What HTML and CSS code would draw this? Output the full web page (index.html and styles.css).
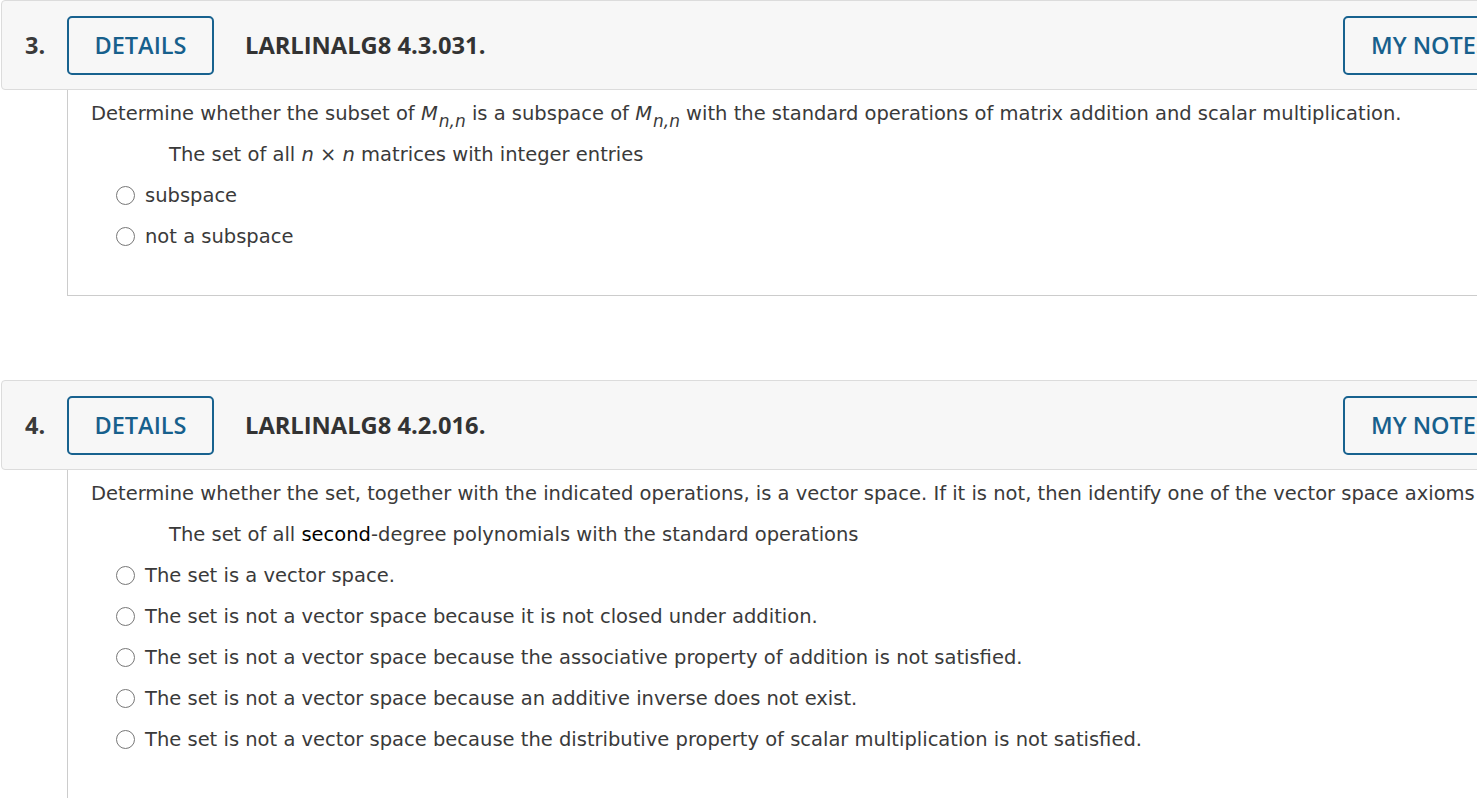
FILE: index.html
```html
<!DOCTYPE html>
<html>
<head>
<meta charset="utf-8">
<link rel="stylesheet" href="styles.css">
</head>
<body>
<div class="page">
  <section class="question">
    <div class="q-header">
      <span class="q-num">3.</span>
      <span class="btn">DETAILS</span>
      <span class="q-title">LARLINALG8 4.3.031.</span>
      <span class="btn btn-notes">MY NOTES</span>
    </div>
    <div class="q-body">
      <p class="line">Determine whether the subset of <i class="math">M</i><sub class="sub">n,n</sub> is a subspace of <i class="math">M</i><sub class="sub">n,n</sub> with the standard operations of matrix addition and scalar multiplication.</p>
      <p class="line indent">The set of all <i class="math">n</i> × <i class="math">n</i> matrices with integer entries</p>
      <label class="line choice"><span class="radio"></span><span>subspace</span></label>
      <label class="line choice"><span class="radio"></span><span>not a subspace</span></label>
    </div>
  </section>
  <section class="question">
    <div class="q-header">
      <span class="q-num">4.</span>
      <span class="btn">DETAILS</span>
      <span class="q-title">LARLINALG8 4.2.016.</span>
      <span class="btn btn-notes">MY NOTES</span>
    </div>
    <div class="q-body">
      <p class="line">Determine whether the set, together with the indicated operations, is a vector space. If it is not, then identify one of the vector space axioms that fails.</p>
      <p class="line indent">The set of all <span class="dark">second</span>-degree polynomials with the standard operations</p>
      <label class="line choice"><span class="radio"></span><span>The set is a vector space.</span></label>
      <label class="line choice"><span class="radio"></span><span>The set is not a vector space because it is not closed under addition.</span></label>
      <label class="line choice"><span class="radio"></span><span>The set is not a vector space because the associative property of addition is not satisfied.</span></label>
      <label class="line choice"><span class="radio"></span><span>The set is not a vector space because an additive inverse does not exist.</span></label>
      <label class="line choice"><span class="radio"></span><span>The set is not a vector space because the distributive property of scalar multiplication is not satisfied.</span></label>
    </div>
  </section>
</div>
</body>
</html>
```

FILE: styles.css
```css
html, body {
  margin: 0;
  padding: 0;
  background: #ffffff;
  overflow: hidden;
}
.page {
  width: 1547px;
  padding-left: 1px;
}
.question {
  margin-bottom: 84px;
}
.q-header {
  display: flex;
  align-items: center;
  height: 90px;
  box-sizing: border-box;
  background: #f7f7f7;
  border: 1px solid #dcdcdc;
  border-radius: 4px;
  padding-left: 23px;
  padding-right: 24px;
  font-family: "Open Sans", sans-serif;
}
.q-num {
  width: 42px;
  font-size: 23.5px;
  font-weight: 700;
  color: #3a3a3a;
}
.btn {
  display: flex;
  align-items: center;
  justify-content: center;
  box-sizing: border-box;
  height: 59px;
  width: 147px;
  border: 2px solid #18628f;
  border-radius: 5px;
  color: #17608c;
  font-size: 23.5px;
  font-weight: 600;
}
.btn-notes {
  margin-left: auto;
  width: 180px;
  justify-content: flex-start;
  padding-left: 26px;
}
.q-title {
  margin-left: 31px;
  font-size: 23.7px;
  font-weight: 700;
  color: #333333;
}
.q-body {
  margin-left: 66px;
  border-left: 1px solid #cccccc;
  border-bottom: 1px solid #cccccc;
  padding: 3px 0 38px 23px;
  font-family: "DejaVu Sans", Verdana, sans-serif;
  font-size: 19.5px;
  color: #3a3a3a;
}
.line {
  display: block;
  margin: 0;
  height: 41px;
  line-height: 41px;
  white-space: nowrap;
}
.indent {
  padding-left: 78px;
}
.choice {
  display: flex;
  align-items: center;
  padding-left: 25px;
}
.radio {
  width: 17px;
  height: 17px;
  border: 1px solid #777777;
  border-radius: 50%;
  margin-right: 10px;
  flex: none;
  background: #ffffff;
}
.math {
  font-style: italic;
}
.sub {
  font-style: italic;
  font-size: 17px;
  vertical-align: -7px;
  line-height: 0;
  margin-left: 1px;
}
.dark {
  color: #000000;
}
```
